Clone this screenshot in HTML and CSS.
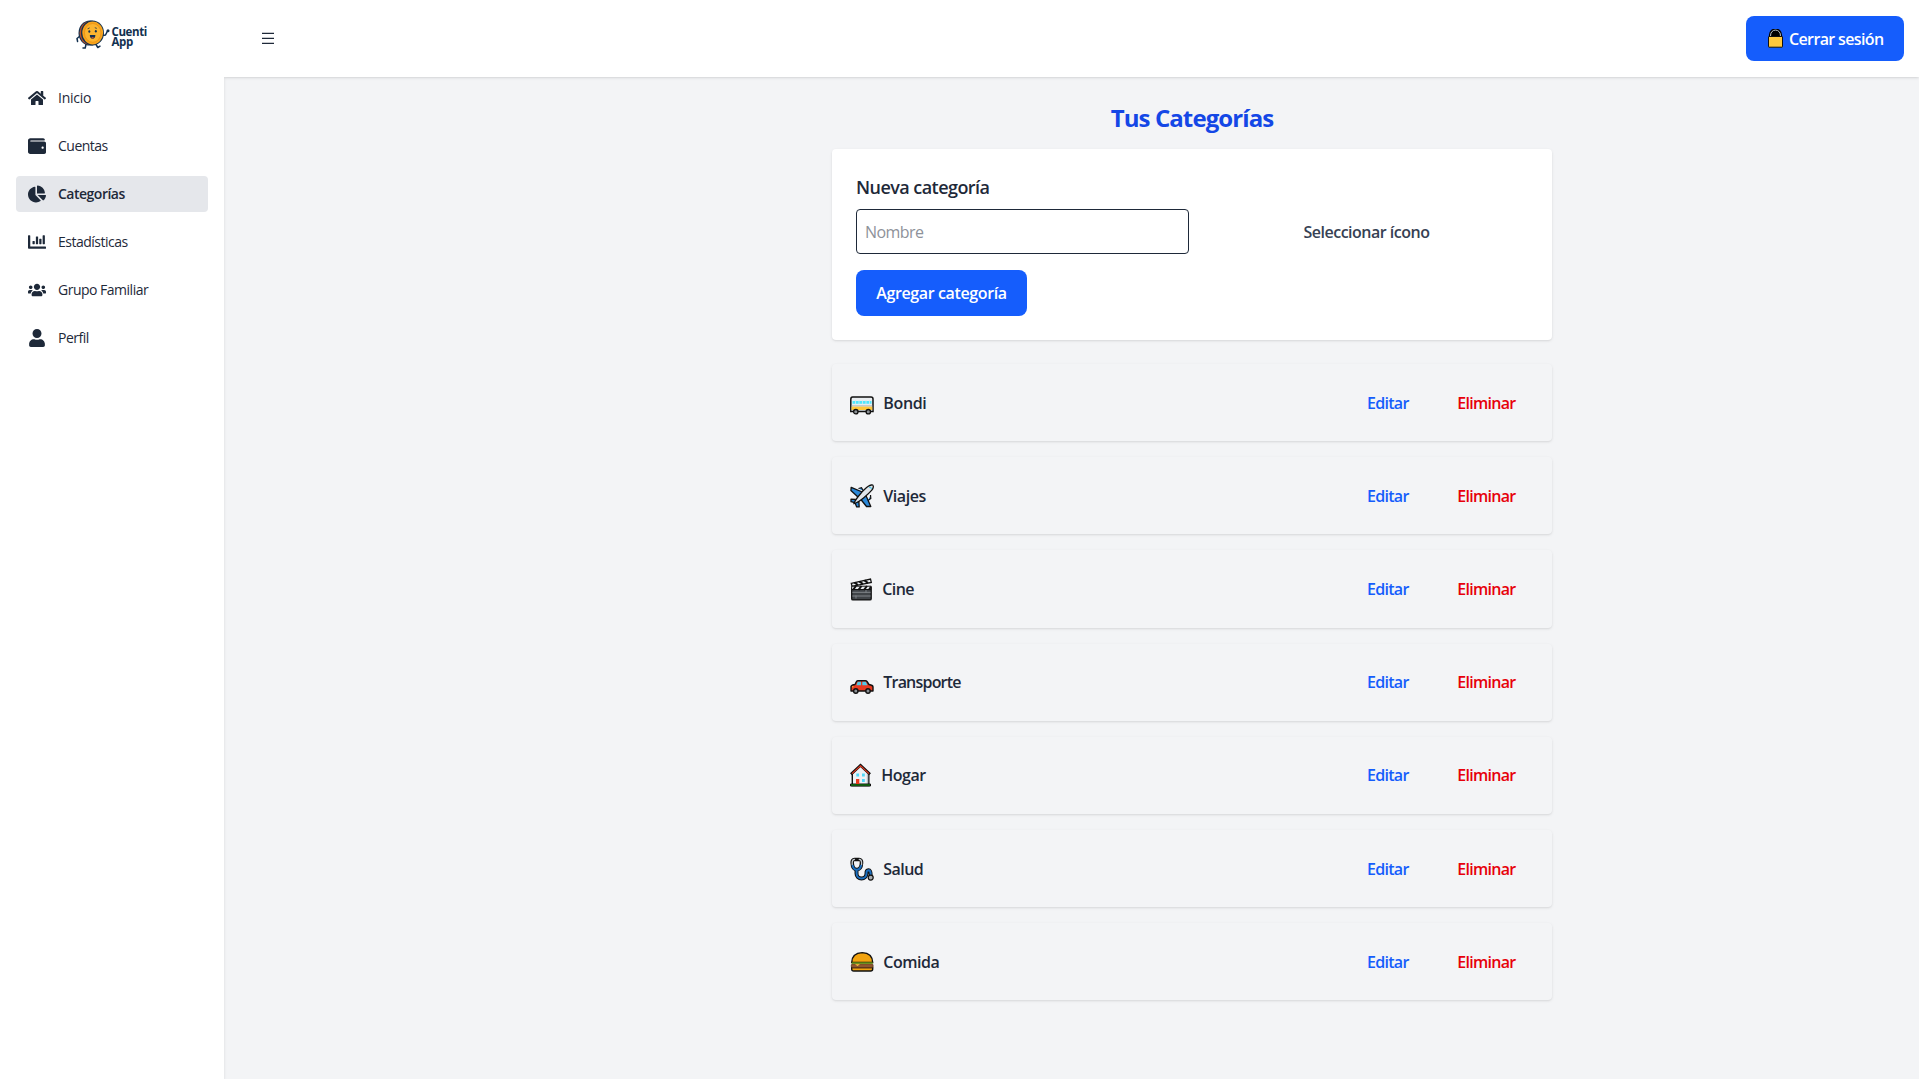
FILE: index.html
```html
<!DOCTYPE html>
<html lang="es">
<head>
<meta charset="utf-8">
<title>Cuenti App</title>
<link rel="stylesheet" href="styles.css">
</head>
<body>
<div class="app">
  <aside class="sidebar">
    <div class="logo">
      <svg width="36" height="34" viewBox="75 17 36 34">
        <g fill="none" stroke="#12304f" stroke-width="1.5" stroke-linecap="round" stroke-linejoin="round">
          <path d="M80 36l-3 2.500.6 3"/>
          <path d="M102.500 35.500l3-.5 2-4"/>
          <path d="M86 44.500l-.8 3.500h-2.200M96 44.500l1.800 3 2.200-1.300"/>
        </g>
        <circle cx="108" cy="30.800" r="1.500" fill="#12304f"/>
        <ellipse cx="90" cy="33" rx="11.500" ry="12.600" fill="#12304f"/>
        <ellipse cx="89.500" cy="33" rx="10" ry="11.500" fill="#b8502a"/>
        <ellipse cx="92.500" cy="32.900" rx="11.500" ry="12.500" fill="#12304f"/>
        <ellipse cx="92.700" cy="32.900" rx="10.400" ry="11.500" fill="#f9a51c"/>
        <ellipse cx="92.700" cy="32.900" rx="8.300" ry="9.400" fill="#fbb42f" stroke="#e88f13" stroke-width=".8"/>
        <ellipse cx="89.300" cy="31.500" rx="1" ry="1.300" fill="#12304f"/>
        <ellipse cx="95.800" cy="31.200" rx="1" ry="1.300" fill="#12304f"/>
        <path d="M87.600 28.800l2-.9M94.800 27.700l2 .7" stroke="#12304f" stroke-width=".8"/>
        <path d="M89.800 35h5.600q-.2 3.800-2.800 3.800T89.800 35z" fill="#12304f"/>
        <path d="M91.300 37.600q1.300-1 2.700 0-.6.9-1.400.9t-1.300-.9z" fill="#d9512c"/>
      </svg>
      <div class="wordmark"><div>Cuenti</div><div>App</div></div>
    </div>
    <nav class="nav">
      <a class="nav-item"><svg viewBox="0 0 576 512"><path d="M280.37 148.26L96 300.11V464a16 16 0 0 0 16 16l112.06-.29a16 16 0 0 0 15.92-16V368a16 16 0 0 1 16-16h64a16 16 0 0 1 16 16v95.64a16 16 0 0 0 16 16.05L464 480a16 16 0 0 0 16-16V300L295.67 148.26a12.19 12.19 0 0 0-15.3 0zM571.6 251.47L488 182.56V44.05a12 12 0 0 0-12-12h-56a12 12 0 0 0-12 12v72.61L318.47 43a48 48 0 0 0-61 0L4.34 251.47a12 12 0 0 0-1.6 16.9l25.5 31A12 12 0 0 0 45.15 301l235.22-193.74a12.19 12.19 0 0 1 15.3 0L530.9 301a12 12 0 0 0 16.9-1.6l25.5-31a12 12 0 0 0-1.7-16.93z"/></svg><span class="track-inicio">Inicio</span></a>
      <a class="nav-item"><svg viewBox="0 0 512 512"><path d="M461.2 128H80c-8.84 0-16-7.16-16-16s7.160-16 16-16h384c8.840 0 16-7.160 16-16 0-26.510-21.490-48-48-48H64C28.650 32 0 60.650 0 96v320c0 35.350 28.650 64 64 64h397.200c28.020 0 50.800-21.530 50.800-48V176c0-26.470-22.780-48-50.800-48zM416 336c-17.670 0-32-14.330-32-32s14.330-32 32-32 32 14.330 32 32-14.330 32-32 32z"/></svg><span>Cuentas</span></a>
      <a class="nav-item active"><svg viewBox="0 0 544 512"><path d="M527.79 288H290.5l158.03 158.03c6.04 6.04 15.98 6.53 22.19.68 38.7-36.46 65.32-85.61 73.13-140.86 1.34-9.46-6.51-17.85-16.06-17.85zm-15.83-64.8C503.72 103.74 408.26 8.28 288.8.04 279.68-.59 272 7.1 272 16.24V240h223.77c9.14 0 16.82-7.68 16.19-16.8zM224 288V50.71c0-9.55-8.39-17.4-17.84-16.06C86.99 51.49-4.1 155.6.14 280.37 4.5 408.51 114.83 513.59 243.03 511.98c50.4-.63 96.97-16.87 135.26-44.03 7.9-5.6 8.42-17.23 1.57-24.08L224 288z"/></svg><span>Categorías</span></a>
      <a class="nav-item"><svg viewBox="0 0 512 512"><path d="M332.8 320h38.4c6.4 0 12.8-6.4 12.8-12.8V172.800c0-6.400-6.400-12.800-12.800-12.800h-38.400c-6.400 0-12.800 6.400-12.800 12.800v134.400c0 6.400 6.400 12.800 12.800 12.800zm96 0h38.400c6.400 0 12.800-6.400 12.800-12.800V76.800c0-6.400-6.400-12.800-12.800-12.800h-38.400c-6.400 0-12.800 6.400-12.800 12.800v230.400c0 6.400 6.400 12.800 12.800 12.800zm-288 0h38.400c6.400 0 12.800-6.400 12.800-12.800v-70.400c0-6.400-6.400-12.800-12.800-12.800h-38.400c-6.400 0-12.800 6.400-12.800 12.800v70.400c0 6.400 6.400 12.800 12.800 12.800zm96 0h38.400c6.400 0 12.800-6.400 12.800-12.800V108.800c0-6.400-6.400-12.800-12.800-12.800h-38.400c-6.400 0-12.800 6.400-12.800 12.800v198.400c0 6.400 6.400 12.800 12.800 12.800zM496 384H64V80c0-8.840-7.160-16-16-16H16C7.160 64 0 71.160 0 80v336c0 17.670 14.330 32 32 32h464c8.840 0 16-7.160 16-16v-32c0-8.840-7.160-16-16-16z"/></svg><span>Estadísticas</span></a>
      <a class="nav-item"><svg viewBox="0 0 640 512"><path d="M96 224c35.300 0 64-28.700 64-64s-28.700-64-64-64-64 28.700-64 64 28.700 64 64 64zm448 0c35.300 0 64-28.700 64-64s-28.700-64-64-64-64 28.700-64 64 28.700 64 64 64zm32 32h-64c-17.600 0-33.500 7.100-45.100 18.600 40.300 22.100 68.900 62 75.100 109.400h66c17.700 0 32-14.300 32-32v-32c0-35.300-28.700-64-64-64zm-256 0c61.900 0 112-50.100 112-112S381.900 32 320 32 208 82.100 208 144s50.100 112 112 112zm76.800 32h-8.300c-20.800 10-43.900 16-68.500 16s-47.600-6-68.500-16h-8.300C179.600 288 128 339.600 128 403.200V432c0 26.500 21.500 48 48 48h288c26.500 0 48-21.500 48-48v-28.800c0-63.600-51.600-115.200-115.200-115.200zm-223.700-13.400C161.500 263.100 145.600 256 128 256H64c-35.300 0-64 28.700-64 64v32c0 17.700 14.300 32 32 32h65.900c6.300-47.400 34.900-87.300 75.200-109.400z"/></svg><span>Grupo Familiar</span></a>
      <a class="nav-item"><svg viewBox="0 0 448 512"><path d="M224 256c70.700 0 128-57.300 128-128S294.700 0 224 0 96 57.300 96 128s57.300 128 128 128zm89.600 32h-16.700c-22.200 10.200-46.900 16-72.900 16s-50.600-5.800-72.900-16h-16.700C60.200 288 0 348.200 0 422.400V464c0 26.500 21.500 48 48 48h352c26.500 0 48-21.500 48-48v-41.600c0-74.200-60.200-134.400-134.400-134.400z"/></svg><span>Perfil</span></a>
    </nav>
  </aside>

  <div class="page">
    <header class="topbar">
      <svg class="menu" width="12" height="12" viewBox="0 0 12 12" aria-label="Menú">
        <path d="M0 0h12v1H0zM0 5h12v1H0zM0 10h12v1H0z" fill="#1e2939" opacity=".25"/>
        <path d="M0 1h12v1H0zM0 6h12v1H0zM0 11h12v1H0z" fill="#1e2939"/>
      </svg>
      <button class="btn logout">
        <svg width="15" height="19" viewBox="0 0 15 19">
          <path d="M2.500 9V5.500a5 5 0 0 1 10 0V9z" fill="#000"/>
          <path d="M2.300 9V6a5.200 5.200 0 0 1 10.400 0v3" fill="none" stroke="#000" stroke-width="2.800"/>
          <path d="M2.600 9V6a4.900 4.900 0 0 1 9.800 0v3" fill="none" stroke="#b9c0c6" stroke-width="1"/>
          <rect x=".5" y="7.500" width="14" height="10.700" rx=".5" fill="#ffc83d" stroke="#111"/>
        </svg>
        <span>Cerrar sesión</span>
      </button>
    </header>

    <main class="main">
      <h1 class="title">Tus Categorías</h1>
      <form class="card">
        <h2 class="card-title">Nueva categoría</h2>
        <div class="fields">
          <input class="input" type="text" placeholder="Nombre">
          <span class="pick">Seleccionar ícono</span>
        </div>
        <button class="btn submit" type="button">Agregar categoría</button>
      </form>

      <ul class="list">
        <li class="row">
          <svg width="24" height="24" viewBox="0 0 24 24">
            <path d="M2.500 6h18.500a2 2 0 0 1 2 2v12.500H.8V8.500Q.8 6 2.500 6z" fill="#e9edf0" stroke="#111" stroke-width="1.500"/>
            <path d="M1.600 15.500h20.700v3.500H1.600z" fill="#ffc83d"/>
            <path d="M1.600 14.800h20.700M1.600 19.500h20.700" stroke="#a7adb2" stroke-width=".8"/>
            <path d="M2.500 10h19v2.800h-19z" fill="#50e6ff"/>
            <path d="M5.500 9v4.500M9 9v4.500M12.500 9v4.500M16 9v4.500M19.500 9v4.500" stroke="#d9e8ee" stroke-width=".8"/>
            <g fill="#8b9095" stroke="#111" stroke-width="1.300"><circle cx="5.800" cy="20.700" r="2.200"/><circle cx="18.300" cy="20.700" r="2.200"/></g>
          </svg>
          <span class="name track-bondi">Bondi</span><a class="edit">Editar</a><a class="delete">Eliminar</a>
        </li>
        <li class="row">
          <svg width="24" height="24" viewBox="0 0 24 24">
            <path d="M13.500 8.500L1.200 3.300.9 6.500l7.600 7zM15.500 10.500l5.300 12h-4.300l-6-7.500zM5.500 15.500L1 15.200v2.500l4 1 1.700 4.200h2.500l-.3-5z" fill="#2b88d8" stroke="#111" stroke-width="1.300" stroke-linejoin="round"/>
            <path d="M8.500 4.500l3-.8 2 3.300M20.500 11l.3 3.500-2.800 2" fill="#2b88d8" stroke="#111" stroke-width="1.200"/>
            <path d="M4 19.500C5.500 14.500 14.500 4.800 18.300 2.300 20.500.8 22.600.7 23 1.300c.6.700.4 3-1.200 4.800C18.500 10 9 18.500 4 19.500z" fill="#dfe5ea" stroke="#111" stroke-width="1.300"/>
            <path d="M19 3.500q2-.6 2.400 1.500" fill="none" stroke="#50c6e8" stroke-width="1.200"/>
          </svg>
          <span class="name track-viajes">Viajes</span><a class="edit">Editar</a><a class="delete">Eliminar</a>
        </li>
        <li class="row">
          <svg width="23" height="24" viewBox="0 0 23 24">
            <path d="M1.700 11.500h19.500v10.200a1.200 1.200 0 0 1-1.200 1.200H2.900a1.200 1.200 0 0 1-1.200-1.200z" fill="#404448" stroke="#111" stroke-width="1.300"/>
            <path d="M2.300 15.300h18.300M2.300 19h18.300" stroke="#888d92" stroke-width=".9"/>
            <path d="M6 18.500v3M16 12.500v3" stroke="#888d92" stroke-width=".8"/>
            <path d="M1.300 6.300L20.500 2l.8 3.400L2 9.300z" fill="#e9edf0" stroke="#111" stroke-width="1.300"/>
            <path d="M4.500 5.700L8 8M9.500 4.600L13 7M14.500 3.400L18 6" stroke="#111" stroke-width="2"/>
            <path d="M1.700 9.200h19.500v3.300H1.700z" fill="#e9edf0" stroke="#111" stroke-width="1"/>
            <path d="M3 12.800L6 9M8.500 12.800l3-3.800M14 12.800L17 9M19 12.800l2-3" stroke="#111" stroke-width="2"/>
          </svg>
          <span class="name track-cine">Cine</span><a class="edit">Editar</a><a class="delete">Eliminar</a>
        </li>
        <li class="row">
          <svg width="24" height="24" viewBox="0 0 24 24">
            <path d="M1 21v-4.500q.3-1.500 4-2l1.500-3q.4-.7 1.500-.7h7.500q1 0 1.500.7l2 3q3.800.5 4 2.300V21z" fill="#e8391f" stroke="#111" stroke-width="1.400" stroke-linejoin="round"/>
            <path d="M6.500 15.200l1.200-3.400h3.300v3.400zM12.300 11.800h3.500l1.600 3.400h-5.100z" fill="#50c8e8"/>
            <path d="M2 16.800h1.500" stroke="#ffc83d"/>
            <g fill="#8b9095" stroke="#111" stroke-width="1.400"><circle cx="5.800" cy="21" r="2.200"/><circle cx="18" cy="21" r="2.200"/></g>
          </svg>
          <span class="name track-transporte">Transporte</span><a class="edit">Editar</a><a class="delete">Eliminar</a>
        </li>
        <li class="row">
          <svg width="22" height="24" viewBox="0 0 22 24">
            <path d="M2.300 22.500V10L10.500 2.500 18.800 10v12.500z" fill="#eef1f4" stroke="#111" stroke-width="1.400"/>
            <path d="M16.800 10h1.400v11h-1.400z" fill="#b5bcc2"/>
            <path d="M1 11.200L10.500 2.300l9.500 8.900" fill="none" stroke="#111" stroke-width="2.800"/>
            <path d="M2 10.700l8.500-7.900 8.500 7.900" fill="none" stroke="#e8391f" stroke-width="1.100"/>
            <path d="M.5 21h20v2H.5z" fill="#13a10e" stroke="#111" stroke-width="1"/>
            <path d="M6 16h3.300v5H6z" fill="#e8391f"/>
            <path d="M6.300 10.500h2.800v3H6.300zM12 10.500h2.800v3H12zM12 16h2.800v3H12z" fill="#50d8f8"/>
          </svg>
          <span class="name track-hogar">Hogar</span><a class="edit">Editar</a><a class="delete">Eliminar</a>
        </li>
        <li class="row">
          <svg width="24" height="24" viewBox="0 0 24 24">
            <g fill="none" stroke-linecap="round">
              <path d="M6.500 13v3.500a5 5 0 0 0 10 0q-.2-3 2-3.200 2.200.2 2.200 5" stroke="#111" stroke-width="4"/>
              <path d="M4.500 2.500Q2 2.500 2.200 6c.2 4.500 1.800 6.500 4.600 6.500s4.500-2 4.700-6.500q.2-3.500-2.300-3.500z" stroke="#111" stroke-width="3.600"/>
              <path d="M2.600 8.500q1 4.300 4.200 4.300t4.300-4.300M6.600 13v3.500a4.900 4.900 0 0 0 9.900 0q-.2-3.200 2-3.300 2.200.1 2.200 4" stroke="#1b6fc0" stroke-width="2"/>
              <path d="M4.500 2.300Q2.200 2.500 2.200 5.500v2M9.200 2.300q2.400.2 2.400 3.200v2" stroke="#c3c9ce" stroke-width="1.300"/>
            </g>
            <circle cx="20.700" cy="20.600" r="2.500" fill="#a7adb2" stroke="#111" stroke-width="1.200"/>
          </svg>
          <span class="name track-salud">Salud</span><a class="edit">Editar</a><a class="delete">Eliminar</a>
        </li>
        <li class="row">
          <svg width="24" height="24" viewBox="0 0 24 24">
            <path d="M1.700 12.500Q2 3 12.200 2.600 22.400 3 22.700 12.500z" fill="#f2a30f" stroke="#111" stroke-width="1.400"/>
            <path d="M1.700 17.500h21v1.500q0 2-2 2h-17q-2 0-2-2z" fill="#f2a30f" stroke="#111" stroke-width="1.400"/>
            <rect x="1.300" y="13.800" width="21.800" height="4" rx="1.500" fill="#8e562e" stroke="#4a2a12" stroke-width=".6"/>
            <path d="M1.700 12.300h21v1.500h-21z" fill="#6a9a14"/>
            <path d="M5 14.200h5l-2.500 1.800z" fill="#ffc83d"/>
          </svg>
          <span class="name track-comida">Comida</span><a class="edit">Editar</a><a class="delete">Eliminar</a>
        </li>
      </ul>
    </main>
  </div>
</div>
</body>
</html>
```
FILE: styles.css
```css
* { box-sizing: border-box; margin: 0; padding: 0; }

body {
  font: 400 16px/24px "Open Sans", "Noto Sans", sans-serif;
  color: #1e2939;
  background: #f3f4f6;
}

.app { display: flex; height: 100vh; overflow: hidden; }

/* Sidebar */
.sidebar {
  width: 224px;
  flex: none;
  background: #fff;
  padding: 17px 16px 0;
  box-shadow: 0 1px 3px rgba(0, 0, 0, .1), 0 1px 2px -1px rgba(0, 0, 0, .1);
}
.logo { display: flex; height: 34px; margin-left: 59px; }
.wordmark {
  padding: 10px 0 0 .5px;
  font-size: 11.5px;
  line-height: 10px;
  font-weight: 700;
  letter-spacing: -.4px;
  color: #12304f;
}
.nav { display: flex; flex-direction: column; gap: 12px; margin-top: 29px; }
.nav-item {
  display: flex;
  align-items: center;
  gap: 12px;
  height: 36px;
  padding: 0 12px;
  border-radius: 4px;
  font-size: 14px;
  line-height: 20px;
  letter-spacing: -.5px;
}
.nav-item svg { width: 18px; height: 18px; fill: #1e2939; }
.nav-item.active { background: #e5e7eb; font-weight: 600; }
.track-inicio { letter-spacing: -.25px; }

/* Header */
.page { flex: 1; display: flex; flex-direction: column; }
.topbar {
  display: flex;
  align-items: center;
  justify-content: space-between;
  height: 77px;
  flex: none;
  padding: 0 15px 0 38px;
  background: #fff;
  box-shadow: 0 1px 3px rgba(0, 0, 0, .1), 0 1px 2px -1px rgba(0, 0, 0, .1);
  clip-path: inset(0 0 -4px 0);
}
.menu { margin-bottom: 1px; }
.btn {
  border: 0;
  border-radius: 8px;
  background: #155dfc;
  color: #fff;
  font: 600 16px/24px "Open Sans", "Noto Sans", sans-serif;
}
.logout {
  display: flex;
  align-items: center;
  gap: 6px;
  width: 158px;
  height: 45px;
  padding-left: 22px;
  letter-spacing: -.63px;
}

/* Content */
.main { width: 961px; margin: 0 auto; padding: 24px 0 0 241px; }
.title {
  padding-top: 1px;
  height: 48px;
  font-size: 24px;
  line-height: 32px;
  font-weight: 700;
  letter-spacing: -.9px;
  text-align: center;
  color: #1447e6;
}
.card, .row {
  border-radius: 4px;
  box-shadow: 0 1px 3px rgba(0, 0, 0, .1), 0 1px 2px -1px rgba(0, 0, 0, .1);
}
.card { background: #fff; height: 191px; padding: 24px; }
.card-title { font-size: 18px; line-height: 28px; font-weight: 600; letter-spacing: -.55px; margin-bottom: 8px; }
.fields { display: grid; grid-template-columns: 333px 1fr; gap: 16px; align-items: center; }
.input {
  height: 45px;
  border: 1px solid #1e2939;
  border-radius: 4px;
  padding: 0 8px;
  font: inherit;
  letter-spacing: -.56px;
}
.input::placeholder { color: #8e929a; }
.pick { text-align: center; font-weight: 600; letter-spacing: -.5px; color: #364153; }
.submit { margin-top: 16px; width: 171px; height: 46px; letter-spacing: -.38px; }

.list { list-style: none; display: grid; gap: 16px; margin-top: 24px; }
.row { display: flex; align-items: center; height: 77.2px; padding: 0 36.5px 0 18px; font-weight: 600; }
.name { flex: 1; margin-left: 9.3px; }
.edit, .delete { letter-spacing: -.7px; }
.edit { color: #155dfc; }
.delete { color: #e7000b; margin-left: 48.5px; }

/* Optical tracking per label */
.track-bondi { letter-spacing: -.35px; }
.track-viajes { letter-spacing: -.45px; }
.track-cine { letter-spacing: -.6px; }
.track-transporte { letter-spacing: -.8px; }
.track-hogar { letter-spacing: -.5px; }
.track-salud { letter-spacing: -.55px; }
.track-comida { letter-spacing: -.5px; }
```
